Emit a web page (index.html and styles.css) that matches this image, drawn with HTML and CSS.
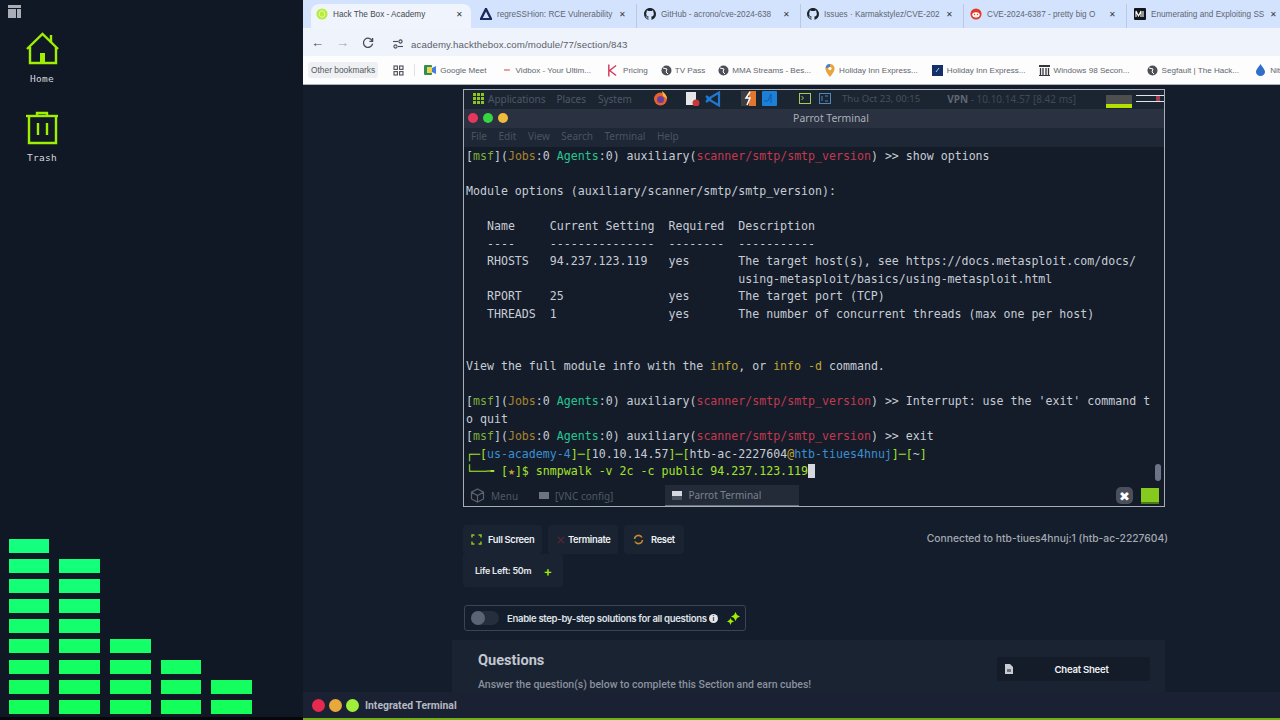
FILE: index.html
```html
<!DOCTYPE html>
<html lang="en">
<head>
    <meta charset="UTF-8">
    <meta name="viewport" content="width=device-width, initial-scale=1.0">
    <title>Hack The Box - Academy</title>
    <link rel="stylesheet" href="styles.css">
</head>
<body>
    <aside class="desktop">
        <svg class="layout-icon" width="14" height="14" viewBox="0 0 14 14"><rect x="0" y="0" width="13" height="3" fill="#a9adb8"/><rect x="0" y="4" width="8" height="9" fill="#a9adb8"/><rect x="9" y="4" width="4" height="9" fill="#a9adb8"/></svg>
        <div class="desk-icon home-icon">
            <svg width="36" height="36" viewBox="0 0 36 36" fill="none" stroke="#9fef00" stroke-width="2.4"><path d="M2 17 L17.5 2 L33 17"/><path d="M26 3 V11"/><path d="M5 15 V31 H31 V15"/><path d="M15 31 V21 H20 V31" fill="#9fef00" stroke="none"/></svg>
            <span>Home</span>
        </div>
        <div class="desk-icon trash-icon">
            <svg width="36" height="36" viewBox="0 0 36 36" fill="none" stroke="#9fef00" stroke-width="2.4"><path d="M1 5 H33"/><path d="M12 5 V2 H22 V5"/><path d="M4 5 V32 H31 V5"/><path d="M13 12 V24"/><path d="M22 12 V24"/></svg>
            <span>Trash</span>
        </div>
        <div class="equalizer">
            <div class="eq-col"><i></i><i></i><i></i><i></i><i></i><i></i><i></i><i></i><i></i></div>
            <div class="eq-col"><i></i><i></i><i></i><i></i><i></i><i></i><i></i><i></i></div>
            <div class="eq-col"><i></i><i></i><i></i><i></i></div>
            <div class="eq-col"><i></i><i></i><i></i></div>
            <div class="eq-col"><i></i><i></i></div>
        </div>
    </aside>

    <main class="browser">
        <div class="tabs">
            <div class="tab active">
                <svg viewBox="0 0 14 14"><circle cx="7" cy="7" r="6.5" fill="#b6ee3a"/><path d="M7 3 L10 5 V9 L7 11 L4 9 V5 Z" fill="none" stroke="#eef9d0"/></svg>
                <span class="tab-title">Hack The Box - Academy</span><span class="tab-x">✕</span>
            </div>
            <div class="tab w1">
                <svg viewBox="0 0 13 13"><path d="M6.5 1 L12 12 H1 Z" fill="none" stroke="#1b2a5c" stroke-width="2.6"/></svg>
                <span class="tab-title">regreSSHion: RCE Vulnerability</span><span class="tab-x">✕</span>
            </div>
            <div class="tab w2">
                <svg viewBox="0 0 16 16"><path fill="#1f2328" d="M8 0C3.58 0 0 3.58 0 8c0 3.54 2.29 6.53 5.47 7.59.4.07.55-.17.55-.38v-1.34c-2.23.48-2.7-1.07-2.7-1.07-.36-.92-.89-1.17-.89-1.17-.73-.5.05-.49.05-.49.8.06 1.23.83 1.23.83.71 1.22 1.87.87 2.33.66.07-.52.28-.87.5-1.07-1.78-.2-3.64-.89-3.64-3.95 0-.87.31-1.59.82-2.15-.08-.2-.36-1.02.08-2.12 0 0 .67-.21 2.2.82a7.6 7.6 0 0 1 4 0c1.53-1.04 2.2-.82 2.2-.82.44 1.1.16 1.92.08 2.12.51.56.82 1.27.82 2.15 0 3.07-1.87 3.75-3.65 3.95.29.25.54.73.54 1.48v2.2c0 .21.15.46.55.38A8 8 0 0 0 16 8c0-4.42-3.58-8-8-8z"/></svg>
                <span class="tab-title">GitHub - acrono/cve-2024-638</span><span class="tab-x">✕</span>
            </div>
            <div class="tab w3">
                <svg viewBox="0 0 16 16"><path fill="#1f2328" d="M8 0C3.58 0 0 3.58 0 8c0 3.54 2.29 6.53 5.47 7.59.4.07.55-.17.55-.38v-1.34c-2.23.48-2.7-1.07-2.7-1.07-.36-.92-.89-1.17-.89-1.17-.73-.5.05-.49.05-.49.8.06 1.23.83 1.23.83.71 1.22 1.87.87 2.33.66.07-.52.28-.87.5-1.07-1.78-.2-3.64-.89-3.64-3.95 0-.87.31-1.59.82-2.15-.08-.2-.36-1.02.08-2.12 0 0 .67-.21 2.2.82a7.6 7.6 0 0 1 4 0c1.53-1.04 2.2-.82 2.2-.82.44 1.1.16 1.92.08 2.12.51.56.82 1.27.82 2.15 0 3.07-1.87 3.75-3.65 3.95.29.25.54.73.54 1.48v2.2c0 .21.15.46.55.38A8 8 0 0 0 16 8c0-4.42-3.58-8-8-8z"/></svg>
                <span class="tab-title">Issues · Karmakstylez/CVE-202</span><span class="tab-x">✕</span>
            </div>
            <div class="tab w4">
                <svg viewBox="0 0 14 14"><circle cx="7" cy="7" r="6.5" fill="#e5392a"/><ellipse cx="7" cy="8" rx="4.4" ry="3" fill="#fff"/><circle cx="5.3" cy="7.6" r="0.8" fill="#e5392a"/><circle cx="8.7" cy="7.6" r="0.8" fill="#e5392a"/></svg>
                <span class="tab-title">CVE-2024-6387 - pretty big O</span><span class="tab-x">✕</span>
            </div>
            <div class="tab w5">
                <svg viewBox="0 0 12 12"><rect width="12" height="12" rx="1" fill="#14151a"/><path d="M2 9 V3 L4.5 8 L7 3 V9 M9 3 V9" fill="none" stroke="#fff" stroke-width="1.1"/></svg>
                <span class="tab-title">Enumerating and Exploiting SS</span><span class="tab-x">✕</span>
            </div>
        </div>

        <div class="toolbar">
            <span class="nav-btn">←</span>
            <span class="nav-btn off">→</span>
            <svg class="reload" width="12" height="12" viewBox="0 0 12 12" fill="none" stroke="#474b52" stroke-width="1.3"><path d="M10.3 4 A4.6 4.6 0 1 0 10.6 6.6"/><path d="M10.6 1 V4.3 H7.4"/></svg>
            <div class="omnibox">
                <svg width="12" height="10" viewBox="0 0 12 10" fill="none" stroke="#474b52" stroke-width="1.1"><path d="M1 2.5 H6"/><circle cx="8.5" cy="2.5" r="1.6"/><path d="M11 7.5 H6"/><circle cx="3.5" cy="7.5" r="1.6"/></svg>
                <span>academy.hackthebox.com/module/77/section/843</span>
            </div>
        </div>

        <div class="bookmarks">
            <span class="other-marks">Other bookmarks</span>
            <svg class="apps" width="11" height="11" viewBox="0 0 11 11" fill="none" stroke="#4a4d53" stroke-width="1.1"><rect x="1" y="1" width="3.4" height="3.4"/><rect x="6.6" y="1" width="3.4" height="3.4"/><rect x="1" y="6.6" width="3.4" height="3.4"/><rect x="6.6" y="6.6" width="3.4" height="3.4"/></svg>
            <span class="mark-sep"></span>
            <span class="mark m1"><svg width="12" height="10" viewBox="0 0 12 10"><rect width="8" height="10" rx="1" fill="#2b8f57"/><rect x="3" y="2" width="5" height="6" fill="#f7d04a"/><path d="M8 3 L12 1 V9 L8 7 Z" fill="#3f7fe0"/></svg>Google Meet</span>
            <span class="mark m2"><svg width="8" height="10" viewBox="0 0 8 10"><path d="M1 5 H7" stroke="#d9655c" stroke-width="1.2"/></svg>Vidbox - Your Ultim...</span>
            <span class="mark m3"><svg width="10" height="13" viewBox="0 0 11 13" fill="none" stroke="#d23c5c" stroke-width="1.6"><path d="M2 0 V13 M10 1 L3 6.5 L10 12"/></svg>Pricing</span>
            <span class="mark m4"><svg width="11" height="11" viewBox="0 0 11 11"><circle cx="5.5" cy="5.5" r="5" fill="#4c5056"/><path d="M2 3 L6 4 L5 7 L7 9" fill="none" stroke="#fff"/></svg>TV Pass</span>
            <span class="mark m5"><svg width="11" height="11" viewBox="0 0 11 11"><circle cx="5.5" cy="5.5" r="5" fill="#4c5056"/><path d="M2 3 L6 4 L5 7 L7 9" fill="none" stroke="#fff"/></svg>MMA Streams - Bes...</span>
            <span class="mark m6"><svg width="10" height="13" viewBox="0 0 10 13"><path d="M5 0 A4.6 4.6 0 0 1 9.6 4.6 C9.6 8 5 13 5 13 C5 13 .4 8 .4 4.6 A4.6 4.6 0 0 1 5 0 Z" fill="#e8a33a"/><path d="M.6 4 A4.6 4.6 0 0 1 5 0 V3 Z" fill="#3f7fe0"/><circle cx="5" cy="4.6" r="1.6" fill="#fff"/></svg>Holiday Inn Express...</span>
            <span class="mark m7"><svg width="11" height="11" viewBox="0 0 11 11"><rect width="11" height="11" fill="#14306b"/><path d="M4 7 L7 3" stroke="#b8c6e8"/></svg>Holiday Inn Express...</span>
            <span class="mark m8"><svg width="11" height="11" viewBox="0 0 11 11"><rect width="11" height="2" fill="#33363b"/><path d="M1.5 3 V10 M4 3 V10 M7 3 V10 M9.5 3 V10" stroke="#33363b" stroke-width="1.3"/><rect y="10" width="11" height="1" fill="#33363b"/></svg>Windows 98 Secon...</span>
            <span class="mark m9"><svg width="11" height="11" viewBox="0 0 11 11"><circle cx="5.5" cy="5.5" r="5" fill="#4c5056"/><path d="M2 3 L6 4 L5 7 L7 9" fill="none" stroke="#fff"/></svg>Segfault | The Hack...</span>
            <span class="mark m10"><svg width="9" height="12" viewBox="0 0 9 12"><path d="M4.5 0 C6 3 9 5 9 8 A4.5 4 0 0 1 0 8 C0 5 3 3 4.5 0 Z" fill="#2f6fc9"/></svg>Nit</span>
        </div>

        <div class="page">
            <div class="vm-window">
                <div class="gnome-panel">
                    <svg class="grid-icon" width="11" height="11" viewBox="0 0 11 11" fill="#8fc31f"><rect width="3" height="3"/><rect x="4" width="3" height="3"/><rect x="8" width="3" height="3"/><rect y="4" width="3" height="3"/><rect x="4" y="4" width="3" height="3"/><rect x="8" y="4" width="3" height="3"/><rect y="8" width="3" height="3"/><rect x="4" y="8" width="3" height="3"/><rect x="8" y="8" width="3" height="3"/></svg>
                    <span class="panel-item applications">Applications</span>
                    <span class="panel-item places">Places</span>
                    <span class="panel-item system">System</span>
                    <svg class="launcher firefox" width="15" height="15" viewBox="0 0 15 15"><circle cx="7.5" cy="8" r="6.5" fill="#e8622c"/><circle cx="7.5" cy="8.5" r="3.5" fill="#6b3fa0"/><path d="M9 0 C12 2 14 5 14 8 L10 5 Z" fill="#f6b73c"/></svg>
                    <svg class="launcher notes" width="14" height="14" viewBox="0 0 14 14"><rect width="10" height="13" fill="#e6e6e8"/><circle cx="10" cy="11" r="3.5" fill="#c8373a"/></svg>
                    <svg class="launcher vscode" width="16" height="16" viewBox="0 0 16 16" fill="none" stroke="#1f78d1" stroke-width="2.2"><path d="M14 1.5 V14.5 L3 8 Z M1 5 L5 8 L1 11"/></svg>
                    <svg class="launcher burp" width="15" height="15" viewBox="0 0 15 15"><rect width="15" height="15" fill="#3b3d42"/><rect x="8" width="7" height="15" fill="#e2762c"/><path d="M9 1 L5 7 H9 L6 14" fill="none" stroke="#fff" stroke-width="1.5"/></svg>
                    <svg class="launcher wire" width="15" height="15" viewBox="0 0 15 15"><rect width="15" height="15" rx="1" fill="#1c80d8"/><path d="M2 10 H6 L9 3 V12" fill="none" stroke="#0f5aa3"/></svg>
                    <svg class="launcher term-ic" width="12" height="11" viewBox="0 0 12 11" fill="none" stroke="#a7c957"><rect x=".5" y=".5" width="11" height="10"/><path d="M2.5 3 L4.5 5 L2.5 7"/></svg>
                    <svg class="launcher root-ic" width="12" height="11" viewBox="0 0 12 11" fill="none" stroke="#4d86b8"><rect x=".5" y=".5" width="11" height="10"/><path d="M3 3 V8 M6 3 H9 M6 8 H9"/></svg>
                    <span class="panel-item clock">Thu Oct 23, 00:15</span>
                    <span class="panel-vpn"><b>VPN</b> - 10.10.14.57 [8.42 ms]</span>
                    <div class="load-meter"></div>
                    <div class="net-meter"></div>
                </div>
                <div class="title-bar">
                    <span class="dot red"></span><span class="dot green"></span><span class="dot yellow"></span>
                    <span class="title-text">Parrot Terminal</span>
                </div>
                <div class="menu-bar">
                    <span>File</span><span>Edit</span><span>View</span><span>Search</span><span>Terminal</span><span>Help</span>
                </div>
                <div class="term-area">
<pre class="term"><span class="g">[</span><span class="lg">msf</span><span class="g">](</span><span class="or">Jobs</span><span class="g">:0 </span><span class="tq">Agents</span><span class="g">:0) auxiliary(</span><span class="rd">scanner/smtp/smtp_version</span><span class="g">) &gt;&gt; show options</span>

Module options (auxiliary/scanner/smtp/smtp_version):

   Name     Current Setting  Required  Description
   ----     ---------------  --------  -----------
   RHOSTS   94.237.123.119   yes       The target host(s), see https://docs.metasploit.com/docs/
                                       using-metasploit/basics/using-metasploit.html
   RPORT    25               yes       The target port (TCP)
   THREADS  1                yes       The number of concurrent threads (max one per host)


<span class="g">View the full module info with the </span><span class="yl">info</span><span class="g">, or </span><span class="yl">info -d</span><span class="g"> command.</span>

<span class="g">[</span><span class="lg">msf</span><span class="g">](</span><span class="or">Jobs</span><span class="g">:0 </span><span class="tq">Agents</span><span class="g">:0) auxiliary(</span><span class="rd">scanner/smtp/smtp_version</span><span class="g">) &gt;&gt; Interrupt: use the 'exit' command t</span>
o quit
<span class="g">[</span><span class="lg">msf</span><span class="g">](</span><span class="or">Jobs</span><span class="g">:0 </span><span class="tq">Agents</span><span class="g">:0) auxiliary(</span><span class="rd">scanner/smtp/smtp_version</span><span class="g">) &gt;&gt; exit</span>
<span class="lime box">┌─</span><span class="lime">[</span><span class="bl">us-academy-4</span><span class="lime">]─[</span><span class="g">10.10.14.57</span><span class="lime">]─[</span><span class="g">htb-ac-2227604</span><span class="yl">@</span><span class="bl">htb-tiues4hnuj</span><span class="lime">]─[</span><span class="g">~</span><span class="lime">]</span>
<span class="lime box">└──╼</span><span class="lime"> [</span><span class="yl">★</span><span class="lime">]$ snmpwalk -v 2c -c public 94.237.123.119</span><span class="cursor"> </span></pre>
                    <div class="scroll-thumb"></div>
                </div>
                <div class="task-bar">
                    <span class="task menu-task">
                        <svg width="15" height="15" viewBox="0 0 15 15" fill="none" stroke="#5d636d" stroke-width="1.2"><path d="M7.5 1 L13.5 4.2 V11 L7.5 14 L1.5 11 V4.2 Z M1.5 4.2 L7.5 7.5 L13.5 4.2 M7.5 7.5 V14"/></svg>Menu
                    </span>
                    <span class="task vnc-task"><i class="task-win"></i>[VNC config]</span>
                    <span class="task term-task"><i class="task-term"></i>Parrot Terminal</span>
                    <span class="close-x">✖</span>
                    <span class="green-box"></span>
                </div>
            </div>

            <div class="controls">
                <div class="control-btns">
                    <button class="ctl full"><svg width="11" height="11" viewBox="0 0 11 11" fill="none" stroke="#8fc31f" stroke-width="1.5"><path d="M1 3.5 V1 H3.5 M7.5 1 H10 V3.5 M10 7.5 V10 H7.5 M3.5 10 H1 V7.5"/></svg>Full Screen</button>
                    <button class="ctl term-btn"><svg width="8" height="8" viewBox="0 0 9 9" stroke="#5a2530" stroke-width="1.5"><path d="M1 1 L8 8 M8 1 L1 8"/></svg>Terminate</button>
                    <button class="ctl reset"><svg width="11" height="11" viewBox="0 0 11 11" fill="none" stroke="#c98a2c" stroke-width="1.5"><path d="M1.5 5 A4 4 0 0 1 9 3.5 M9.5 6 A4 4 0 0 1 2 7.5"/></svg>Reset</button>
                </div>
                <span class="connected">Connected to htb-tiues4hnuj:1 (htb-ac-2227604)</span>
            </div>
            <div class="life-left"><span>Life Left: 50m</span><span class="plus">+</span></div>

            <div class="solutions">
                <span class="toggle"><i></i></span>
                <span class="sol-label">Enable step-by-step solutions for all questions</span>
                <span class="info-dot">i</span>
                <svg width="13" height="13" viewBox="0 0 13 13" fill="#9fef00"><path d="M8.5 0 L10 3 L13 4.5 L10 6 L8.5 9 L7 6 L4 4.5 L7 3 Z"/><path d="M3.5 6 L4.5 8 L7 9.5 L4.5 10.5 L3.5 13 L2.5 10.5 L0 9.5 L2.5 8 Z"/></svg>
            </div>

            <section class="questions">
                <div class="q-text">
                    <h3>Questions</h3>
                    <p>Answer the question(s) below to complete this Section and earn cubes!</p>
                </div>
                <button class="cheat">
                    <svg width="8" height="10" viewBox="0 0 8 10"><path d="M0 0 H5 L8 3 V10 H0 Z" fill="#c9ccd3"/><rect x="2" y="5" width="4" height="3" fill="#6d717a"/></svg>
                    <span>Cheat Sheet</span>
                </button>
            </section>
        </div>

        <div class="int-terminal">
            <span class="wbtn r"></span><span class="wbtn o"></span><span class="wbtn n"></span>
            <span class="int-label">Integrated Terminal</span>
        </div>
        <div class="green-line"></div>
    </main>
</body>
</html>
```

FILE: styles.css
```css
* {
    box-sizing: border-box;
}
html, body {
    height: 100%;
}
body {
    margin: 0;
    width: 1280px;
    height: 720px;
    overflow: hidden;
    display: flex;
    background-color: #111825;
    font-family: "Liberation Sans", Arial, sans-serif;
}
svg {
    flex-shrink: 0;
}

/* left desktop */
.desktop {
    width: 303px;
    height: 720px;
    flex-shrink: 0;
    display: flex;
    flex-direction: column;
    position: relative;
    background-color: #111825;
    border-bottom: 3px solid #05070a;
}
.layout-icon {
    margin: 5px 0 0 8px;
}
.desk-icon {
    width: 84px;
    display: flex;
    flex-direction: column;
    align-items: center;
    color: #d5d8de;
    font-family: "DejaVu Sans Mono", monospace;
    font-size: 9.5px;
    letter-spacing: .3px;
}
.desk-icon svg {
    margin-left: 1px;
}
.desk-icon span {
    margin-top: 5px;
}
.home-icon {
    margin-top: 13px;
}
.trash-icon {
    margin-top: 27px;
}
.equalizer {
    position: absolute;
    left: 9px;
    bottom: 3px;
    display: flex;
    gap: 10px;
    align-items: flex-end;
}
.eq-col {
    width: 41px;
    display: flex;
    flex-direction: column;
    gap: 6.2px;
}
.eq-col:first-child, .eq-col:nth-child(4) {
    width: 40px;
}
.eq-col i {
    display: block;
    height: 14px;
    background: linear-gradient(#14ff80 539px, #14ff58 714px) fixed;
}

/* browser chrome */
.browser {
    width: 977px;
    height: 720px;
    position: relative;
    display: flex;
    flex-direction: column;
    background-color: #141d2b;
}
.tabs {
    height: 28px;
    display: flex;
    align-items: flex-end;
    padding-left: 8px;
    background-color: #d3e3fd;
    overflow: hidden;
}
.tab {
    height: 24px;
    display: flex;
    align-items: center;
    flex-shrink: 0;
    gap: 5px;
    padding: 0 10px 4px 6px;
    font-size: 8.2px;
    color: #5f6670;
}
.tab svg {
    width: 12px;
    height: 12px;
}
.tab.active {
    width: 160px;
    padding-left: 5px;
    padding-right: 8px;
    background-color: #f0f4fc;
    border-radius: 8px 8px 0 0;
    color: #444850;
}
.tab.w1 { width: 165px; padding-left: 9px; }
.tab.w2 { width: 164px; padding-left: 7px; border-left: 1px solid #b9c9e2; }
.tab.w3 { width: 163px; border-left: 1px solid #b9c9e2; }
.tab.w4 { width: 163px; border-left: 1px solid #b9c9e2; }
.tab.w5 { width: 154px; padding-left: 7px; padding-right: 3px; border-left: 1px solid #b9c9e2; }
.tab-title {
    flex: 1;
    white-space: nowrap;
    min-width: 0;
}
.tab-x {
    font-size: 8px;
    color: #33373d;
}

.toolbar {
    height: 28px;
    display: flex;
    align-items: center;
    padding-left: 8px;
    background-color: #eff3fb;
}
.nav-btn {
    width: 14px;
    margin-right: 11px;
    font-size: 13px;
    color: #4a4e55;
}
.nav-btn.off {
    color: #a4a8af;
}
.reload {
    margin: 2px 18px 0 1px;
}
.omnibox {
    flex: 1;
    height: 24px;
    display: flex;
    align-items: center;
    gap: 7px;
    margin-right: 8px;
    padding-top: 4px;
    font-size: 9.7px;
    color: #5b6067;
    letter-spacing: .1px;
}

.bookmarks {
    height: 29px;
    display: flex;
    align-items: center;
    padding-left: 5px;
    background-color: #fdfdfe;
    border-bottom: 1px solid #aeb1b6;
    white-space: nowrap;
    font-size: 8.1px;
    color: #62666c;
    overflow: hidden;
}
.other-marks {
    flex-shrink: 0;
    padding: 3px;
    background-color: #eef0f3;
    border-radius: 3px;
    font-size: 8.4px;
    color: #555a60;
}
.apps {
    margin-left: 15px;
}
.mark-sep {
    width: 1px;
    height: 12px;
    flex-shrink: 0;
    margin: 0 9px 0 10px;
    background-color: #dfe1e5;
}
.mark {
    display: flex;
    align-items: center;
    gap: 4px;
    flex-shrink: 0;
}
.m2 { margin-left: 16px; gap: 5px; }
.m3 { margin-left: 16px; gap: 6px; }
.m4 { margin-left: 13px; gap: 3px; }
.m5 { margin-left: 13px; gap: 3px; }
.m6 { margin-left: 14px; }
.m7 { margin-left: 14px; }
.m8 { margin-left: 13px; }
.m9 { margin-left: 17px; }
.m10 { margin-left: 17px; gap: 5px; }

/* page under the chrome */
.page {
    flex: 1;
    display: flex;
    flex-direction: column;
    padding: 4px 115px 0 160px;
    background-color: #141d2b;
    overflow: hidden;
}
.vm-window {
    width: 702px;
    height: 418px;
    flex-shrink: 0;
    display: flex;
    flex-direction: column;
    border: 1px solid #a7acb5;
    background-color: #141c2a;
}
.gnome-panel {
    height: 19px;
    display: flex;
    align-items: center;
    position: relative;
    padding-bottom: 2px;
    background-color: #1b2431;
    font-size: 10px;
    color: #4e5866;
    font-family: "Noto Sans", sans-serif;
}
.grid-icon {
    margin-left: 9px;
}
.applications { margin-left: 4px; }
.places { margin-left: 11px; }
.system { margin-left: 12px; }
.firefox { margin-left: 21px; }
.notes { margin-left: 18px; }
.vscode { margin-left: 5px; }
.burp { margin-left: 20px; }
.wire { margin-left: 6px; }
.term-ic { margin-left: 22px; }
.root-ic { margin-left: 8px; }
.clock {
    margin-left: 11px;
    font-size: 9.6px;
    color: #46505e;
}
.panel-vpn {
    margin-left: 27px;
    color: #3f4957;
}
.panel-vpn b {
    color: #5e6773;
}
.load-meter {
    position: absolute;
    left: 642px;
    top: 5px;
    width: 26px;
    height: 13px;
    background: linear-gradient(#4c4f4e 0 9px, #b4e000 9px);
}
.net-meter {
    position: absolute;
    left: 672px;
    top: 5px;
    width: 28px;
    height: 7px;
    border-top: 1px solid #dfe3ea;
    border-bottom: 1px solid #dfe3ea;
    background: linear-gradient(90deg, transparent 20px, #a63a52 20px 24px, transparent 24px);
}

.title-bar {
    height: 19px;
    display: flex;
    align-items: center;
    position: relative;
    padding: 0 0 2px 4px;
    background-color: #2a3140;
}
.dot {
    width: 10px;
    height: 10px;
    margin-right: 5px;
    border-radius: 50%;
}
.dot.red { background-color: #e5375c; }
.dot.green { background-color: #35d63f; }
.dot.yellow { background-color: #f0bb3a; }
.title-text {
    position: absolute;
    left: 34px;
    right: 0;
    text-align: center;
    font-family: "Noto Sans", sans-serif;
    font-size: 10.4px;
    color: #aab0ba;
}
.menu-bar {
    height: 19px;
    display: flex;
    align-items: center;
    gap: 11.5px;
    padding: 0 0 3px 7px;
    background-color: #1e2735;
    font-family: "Noto Sans", sans-serif;
    font-size: 10px;
    color: #4a5361;
}

.term-area {
    flex: 1;
    position: relative;
    overflow: hidden;
    background-color: #141c2a;
}
.term {
    margin: 0;
    padding: 1px 0 0 2px;
    font-family: "DejaVu Sans Mono", monospace;
    font-size: 11.6px;
    line-height: 17.5px;
    color: #c7ccd4;
}
.g { color: #c7ccd4; }
.lg { color: #7fae3a; }
.or { color: #a8832f; }
.tq { color: #26c78f; }
.rd { color: #c23a4e; }
.yl { color: #c0a531; }
.bl { color: #3b8fd0; }
.lime { color: #a5e32b; }
.box { font-weight: bold; }
.cursor {
    background-color: #d5d8de;
}
.scroll-thumb {
    position: absolute;
    right: 3px;
    top: 317px;
    width: 6px;
    height: 17px;
    border-radius: 3px;
    background-color: #6c7485;
}

.task-bar {
    height: 21px;
    display: flex;
    align-items: center;
    position: relative;
    background-color: #141c2a;
    font-family: "Noto Sans", sans-serif;
    font-size: 10px;
    color: #4e5866;
}
.task {
    display: flex;
    align-items: center;
    gap: 6px;
    height: 100%;
}
.menu-task { margin-left: 6px; }
.vnc-task { margin-left: 21px; }
.term-task {
    margin-left: 52px;
    width: 134px;
    padding-left: 7px;
    background-color: #232b38;
    border-bottom: 1px solid #6a7180;
    color: #7b828e;
}
.task-win {
    width: 10px;
    height: 7px;
    background-color: #6d7480;
}
.task-term {
    width: 10px;
    height: 9px;
    background: linear-gradient(#d5d8de 0 5px, #4b5260 5px);
}
.close-x {
    position: absolute;
    right: 31px;
    top: 2px;
    width: 17px;
    height: 17px;
    display: flex;
    align-items: center;
    justify-content: center;
    border-radius: 5px;
    background-color: #4a4f5b;
    font-size: 13px;
    color: #fff;
}
.green-box {
    position: absolute;
    right: 5px;
    top: 3px;
    width: 18px;
    height: 16px;
    background-color: #86c91f;
    border-bottom: 2px solid #4d7a12;
}

/* controls under the VM */
.controls {
    margin-top: 18px;
    display: flex;
    justify-content: space-between;
    align-items: flex-start;
}
.control-btns {
    display: flex;
    gap: 6px;
}
.ctl {
    height: 29px;
    display: flex;
    align-items: center;
    padding: 0;
    border: none;
    border-radius: 3px;
    background-color: #1a2332;
    font-family: Inter, sans-serif;
    font-size: 9.3px;
    font-weight: 600;
    letter-spacing: -.3px;
    color: #eef0f3;
}
.ctl.full { width: 79px; padding-left: 8px; gap: 6px; }
.ctl.term-btn { width: 70px; padding-left: 9px; gap: 3px; }
.ctl.reset { width: 60px; padding-left: 9px; gap: 7px; }
.connected {
    margin-top: 7px;
    margin-right: -3px;
    font-family: Inter, sans-serif;
    font-size: 10.3px;
    font-weight: 500;
    color: #a4a9b2;
}
.life-left {
    width: 100px;
    height: 33px;
    flex-shrink: 0;
    display: flex;
    align-items: center;
    gap: 12px;
    padding-left: 12px;
    border-radius: 3px;
    background-color: #1a2332;
    white-space: nowrap;
    font-family: Inter, sans-serif;
    font-size: 9px;
    font-weight: 600;
    letter-spacing: -.25px;
    color: #e6e8ec;
}
.plus {
    font-size: 13px;
    color: #9fef00;
}
.solutions {
    width: 282px;
    height: 26px;
    flex-shrink: 0;
    margin: 18px 0 0 1px;
    display: flex;
    align-items: center;
    padding-left: 6px;
    border: 1px solid #3a4454;
    border-radius: 3px;
    font-family: Inter, sans-serif;
    font-size: 9.6px;
    font-weight: 600;
    letter-spacing: -.34px;
    color: #dfe2e7;
}
.toggle {
    width: 28px;
    height: 14px;
    flex-shrink: 0;
    border-radius: 7px;
    background-color: #252e3d;
    margin-right: 8px;
    display: flex;
    align-items: center;
}
.toggle i {
    width: 14px;
    height: 14px;
    border-radius: 50%;
    background-color: #5a6475;
}
.sol-label {
    white-space: nowrap;
}
.info-dot {
    width: 9px;
    height: 9px;
    flex-shrink: 0;
    margin: 0 9px 0 2px;
    border-radius: 50%;
    background-color: #e4e6ea;
    color: #1a2332;
    font-size: 7px;
    line-height: 9px;
    text-align: center;
}
.questions {
    height: 52px;
    flex-shrink: 0;
    margin: 9px 0 0 -11px;
    padding-left: 26px;
    display: flex;
    justify-content: space-between;
    background-color: #1a2332;
}
.questions h3 {
    margin: 11px 0 0 0;
    font-family: Roboto, sans-serif;
    font-size: 14.6px;
    color: #c2c7d0;
}
.questions p {
    margin: 9px 0 0 0;
    font-family: Roboto, sans-serif;
    font-size: 10.5px;
    font-weight: 500;
    color: #8a919e;
}
.cheat {
    width: 153px;
    height: 24px;
    margin: 17px 15px 0 0;
    display: flex;
    align-items: center;
    padding: 0 0 0 8px;
    border: none;
    border-radius: 3px;
    background-color: #141c29;
    font-family: Inter, sans-serif;
    font-size: 9.6px;
    font-weight: 600;
    letter-spacing: -.25px;
    color: #eef0f3;
}
.cheat span {
    flex: 1;
    text-align: center;
}

/* overlay at the bottom */
.int-terminal {
    position: absolute;
    left: 0;
    right: 0;
    bottom: 2px;
    height: 26px;
    display: flex;
    align-items: center;
    gap: 4px;
    padding-left: 9px;
    background-color: #192132;
}
.wbtn {
    width: 13px;
    height: 13px;
    border-radius: 50%;
}
.wbtn.r { background-color: #e5294f; }
.wbtn.o { background-color: #e8a93a; }
.wbtn.n { background-color: #9fef3a; }
.int-label {
    margin-left: 2px;
    font-family: Roboto, sans-serif;
    font-size: 10.4px;
    font-weight: 700;
    color: #b3b8c2;
    white-space: nowrap;
}
.green-line {
    position: absolute;
    left: 0;
    right: 0;
    bottom: 0;
    height: 2px;
    background-color: #6fb10f;
}
```
